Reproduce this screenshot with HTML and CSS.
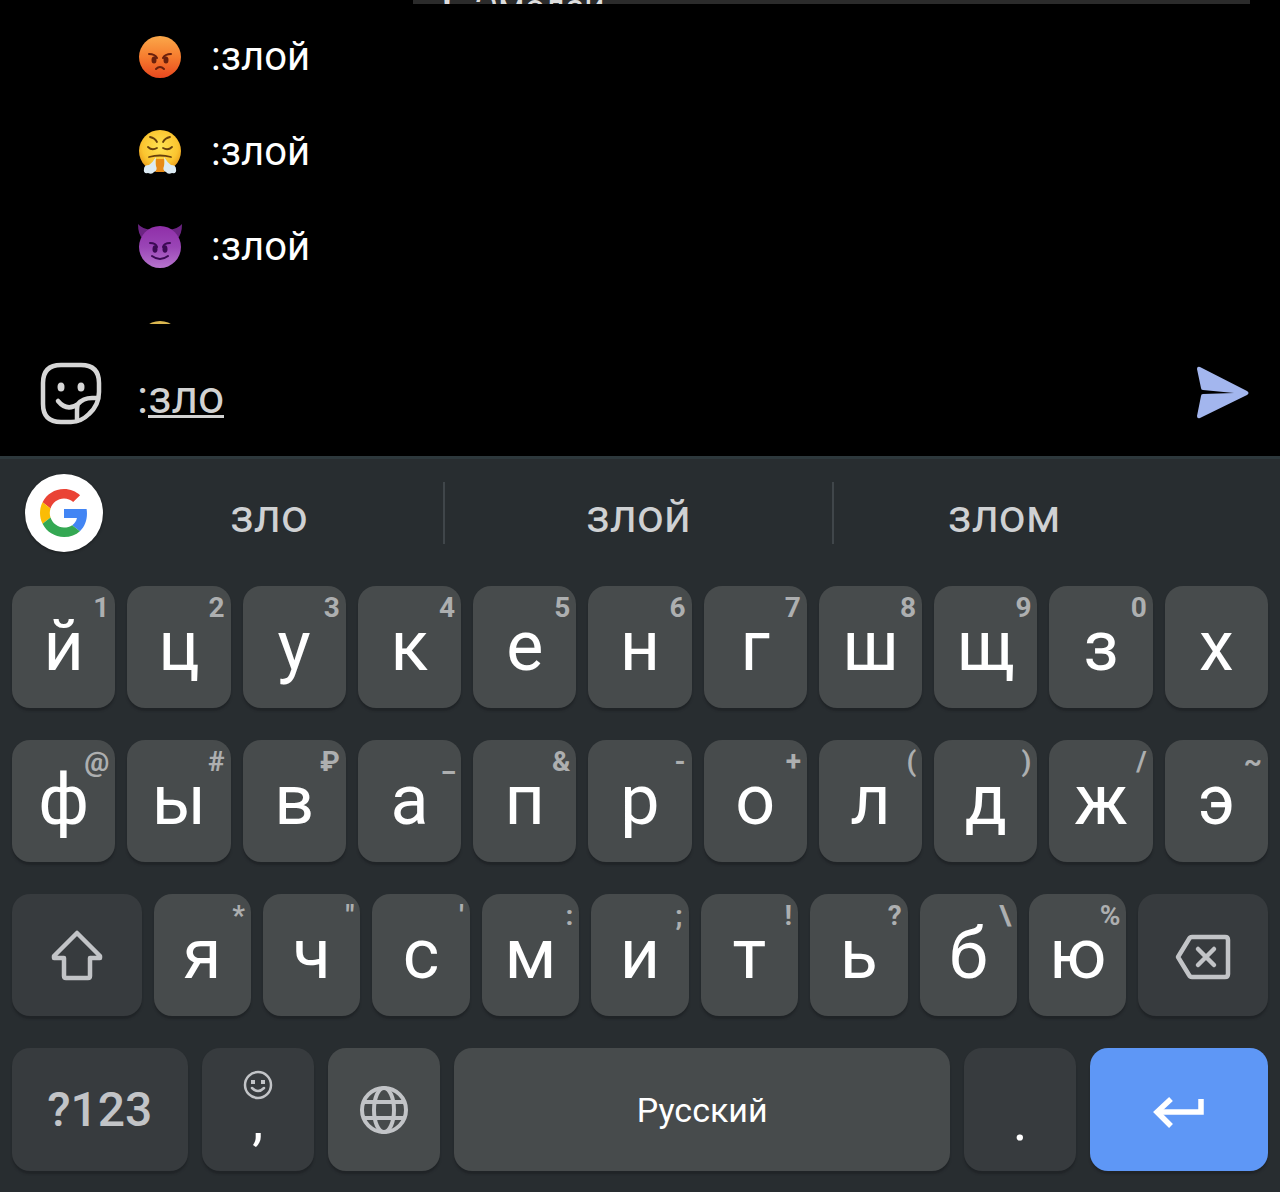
FILE: index.html
```html
<!DOCTYPE html>
<html lang="ru">
<head>
<meta charset="UTF-8">
<meta name="viewport" content="width=device-width, initial-scale=1">
<title>Эмодзи</title>
<link rel="stylesheet" href="styles.css">
</head>
<body>
  <main class="chat">
    <div class="message"><b>!</b><span>Эмодзи</span></div>

    <!-- Emoji suggestions -->
    <ul class="emoji-list">
      <li>
        <button class="emoji-item" type="button">
          <svg class="emoji" viewBox="0 0 48 48" aria-hidden="true">
            <defs>
              <linearGradient id="red" x1="0" y1="0" x2="0" y2="1">
                <stop offset="0" stop-color="#fba84a"/>
                <stop offset="0.5" stop-color="#f67c2e"/>
                <stop offset="1" stop-color="#e8481f"/>
              </linearGradient>
            </defs>
            <circle cx="24" cy="24" r="21" fill="url(#red)"/>
            <g fill="none" stroke="#6a200c" stroke-width="2" stroke-linecap="round">
              <path d="M13 21q6 0 8 4M35 21q-6 0-8 4M20 36q4-4 8 0"/>
            </g>
            <ellipse cx="18" cy="27" rx="2.500" ry="3.500" fill="#6a200c"/>
            <ellipse cx="30" cy="27" rx="2.500" ry="3.500" fill="#6a200c"/>
          </svg>
          <span>:злой</span>
        </button>
      </li>
      <li>
        <button class="emoji-item" type="button">
          <svg class="emoji" viewBox="0 0 48 48" aria-hidden="true">
            <defs>
              <radialGradient id="yellow" cx="0.5" cy="0.4" r="0.6">
                <stop offset="0" stop-color="#ffe352"/>
                <stop offset="0.7" stop-color="#fbc530"/>
                <stop offset="1" stop-color="#e99b1c"/>
              </radialGradient>
            </defs>
            <circle cx="24" cy="23" r="21" fill="url(#yellow)"/>
            <g fill="none" stroke="#68400c" stroke-width="1.800" stroke-linecap="round">
              <path d="M14 9q5 1 7 5M34 9q-5 1-7 5M12 19q4 4 9 1M36 19q-4 4-9 1M13 29q11-3 22 0"/>
            </g>
            <path d="M20 31h8v13h-8z" fill="#e78b18"/>
            <path d="M20 29q-1 6 0 9 2 4-2 6-2 3-6 1-5 1-4-4 0-4 5-4 4-3 7-8zM28 29q1 6 0 9-2 4 2 6 2 3 6 1 5 1 4-4 0-4-5-4-4-3-7-8z" fill="#dcebf4"/>
          </svg>
          <span>:злой</span>
        </button>
      </li>
      <li>
        <button class="emoji-item" type="button">
          <svg class="emoji" viewBox="0 0 48 48" aria-hidden="true">
            <defs>
              <linearGradient id="purple" x1="0" y1="0" x2="0" y2="1">
                <stop offset="0" stop-color="#8f2fa8"/>
                <stop offset="0.5" stop-color="#9a45b6"/>
                <stop offset="1" stop-color="#b674cd"/>
              </linearGradient>
            </defs>
            <path d="M2 1q0 11 5 15l9-9Q6 6 2 1zM46 1q0 11-5 15l-9-9q10-1 14-6z" fill="#6c2483"/>
            <circle cx="24" cy="24" r="21" fill="url(#purple)"/>
            <g fill="none" stroke="#3b0a54" stroke-width="2" stroke-linecap="round">
              <path d="M14 20q6 0 7 4M34 20q-6 0-7 4M16 33q8 6 16 0"/>
            </g>
            <ellipse cx="19" cy="26" rx="2.500" ry="3.800" fill="#3b0a54"/>
            <ellipse cx="29" cy="26" rx="2.500" ry="3.800" fill="#3b0a54"/>
          </svg>
          <span>:злой</span>
        </button>
      </li>
      <li>
        <button class="emoji-item" type="button" aria-label="Эмодзи">
          <svg class="emoji" viewBox="0 0 48 48" aria-hidden="true">
            <circle cx="24" cy="24" r="21" fill="#dcb850"/>
          </svg>
        </button>
      </li>
    </ul>

    <form class="composer">
      <button class="icon-button" type="button" aria-label="Стикеры">
        <svg class="sticker-icon" viewBox="0 0 64 64" fill="none" stroke="#d6d6d6" stroke-width="4.500">
          <path d="M22 4h20q18 0 18 18v9q0 13-10 22-8 8-18 8H22Q4 61 4 43V22Q4 4 22 4z"/>
          <path d="M59 37H53Q44 37 39 43 38 45 38 51v9M19 40q9 11 20 3" stroke-linecap="round"/>
          <ellipse cx="22" cy="26" rx="3.500" ry="4.500" fill="#d6d6d6" stroke="none"/>
          <ellipse cx="42" cy="26" rx="3.500" ry="4.500" fill="#d6d6d6" stroke="none"/>
        </svg>
      </button>
      <input class="message-input" type="text" value=":зло" aria-label="Сообщение">
      <button class="icon-button" type="button" aria-label="Отправить">
        <svg class="send-icon" viewBox="0 0 54 54">
          <path d="M4 1 51 25q3 2 0 4L4 52q-3 1-3-2L5 30q0-2 2-2l31-1-31-3q-2 0-2-2L1 3q0-3 3-2z" fill="#a3b6ee"/>
        </svg>
      </button>
    </form>
  </main>

  <section class="keyboard">
    <div class="suggestions">
      <button class="google" type="button" aria-label="Google">
        <svg viewBox="0 0 48 48">
          <path fill="#ea4335" d="M24 9.500c3.540 0 6.710 1.220 9.210 3.600l6.850-6.850C35.900 2.380 30.470 0 24 0 14.620 0 6.510 5.380 2.560 13.220l7.980 6.190C12.430 13.720 17.740 9.500 24 9.500z"/>
          <path fill="#4285f4" d="M46.980 24.550c0-1.570-.15-3.090-.38-4.550H24v9.020h12.940c-.58 2.960-2.260 5.480-4.780 7.180l7.730 6c4.510-4.180 7.090-10.360 7.090-17.650z"/>
          <path fill="#fbbc05" d="M10.530 28.590c-.48-1.450-.76-2.990-.76-4.590s.27-3.140.76-4.590l-7.980-6.190C.92 16.460 0 20.120 0 24s.92 7.540 2.560 10.780l7.970-6.190z"/>
          <path fill="#34a853" d="M24 48c6.480 0 11.930-2.130 15.890-5.810l-7.730-6c-2.150 1.450-4.920 2.300-8.160 2.300-6.260 0-11.570-4.220-13.470-9.910l-7.980 6.190C6.510 42.620 14.620 48 24 48z"/>
        </svg>
      </button>
      <button class="word" type="button">зло</button>
      <button class="word" type="button">злой</button>
      <button class="word" type="button">злом</button>
    </div>

    <div class="keys">
      <div class="row">
        <button class="key" type="button">й<span class="hint">1</span></button>
        <button class="key" type="button">ц<span class="hint">2</span></button>
        <button class="key" type="button">у<span class="hint">3</span></button>
        <button class="key" type="button">к<span class="hint">4</span></button>
        <button class="key" type="button">е<span class="hint">5</span></button>
        <button class="key" type="button">н<span class="hint">6</span></button>
        <button class="key" type="button">г<span class="hint">7</span></button>
        <button class="key" type="button">ш<span class="hint">8</span></button>
        <button class="key" type="button">щ<span class="hint">9</span></button>
        <button class="key" type="button">з<span class="hint">0</span></button>
        <button class="key" type="button">х</button>
      </div>
      <div class="row">
        <button class="key" type="button">ф<span class="hint">@</span></button>
        <button class="key" type="button">ы<span class="hint">#</span></button>
        <button class="key" type="button">в<span class="hint">₽</span></button>
        <button class="key" type="button">а<span class="hint">_</span></button>
        <button class="key" type="button">п<span class="hint">&amp;</span></button>
        <button class="key" type="button">р<span class="hint">-</span></button>
        <button class="key" type="button">о<span class="hint">+</span></button>
        <button class="key" type="button">л<span class="hint">(</span></button>
        <button class="key" type="button">д<span class="hint">)</span></button>
        <button class="key" type="button">ж<span class="hint">/</span></button>
        <button class="key" type="button">э<span class="hint">~</span></button>
      </div>
      <div class="row row-shift">
        <button class="key dark" type="button" aria-label="Shift">
          <svg class="key-icon" viewBox="0 0 56 56" fill="none" stroke="#c2c4c7" stroke-width="4.500" stroke-linejoin="round">
            <path d="M28 7 5 30v2h10v18q0 2 2 2h22q2 0 2-2V32h10v-2z"/>
          </svg>
        </button>
        <button class="key" type="button">я<span class="hint">*</span></button>
        <button class="key" type="button">ч<span class="hint">"</span></button>
        <button class="key" type="button">с<span class="hint">'</span></button>
        <button class="key" type="button">м<span class="hint">:</span></button>
        <button class="key" type="button">и<span class="hint">;</span></button>
        <button class="key" type="button">т<span class="hint">!</span></button>
        <button class="key" type="button">ь<span class="hint">?</span></button>
        <button class="key" type="button">б<span class="hint">\</span></button>
        <button class="key" type="button">ю<span class="hint">%</span></button>
        <button class="key dark" type="button" aria-label="Удалить">
          <svg class="key-icon" viewBox="0 0 56 56" fill="none" stroke="#c2c4c7" stroke-width="4.500" stroke-linejoin="round">
            <path d="M17 11h33q3 0 3 3v34q0 3-3 3H17q-2 0-3-2L3 31 14 13q1-2 3-2z"/>
            <path d="m23 23 16 16M39 23 23 39" stroke-linecap="round"/>
          </svg>
        </button>
      </div>
      <div class="row row-bottom">
        <button class="key dark symbols" type="button">?123</button>
        <button class="key dark comma" type="button">
          <svg class="smile" viewBox="0 0 30 30" fill="none" stroke="#c2c4c7" stroke-width="2.500">
            <circle cx="15" cy="15" r="13"/>
            <path d="M9 18q6 6 12 0" stroke-linecap="round"/>
            <path d="M8 10h4v4H8zM18 10h4v4h-4z" fill="#c2c4c7" stroke="none"/>
          </svg>
          <span>,</span>
        </button>
        <button class="key" type="button" aria-label="Язык">
          <svg class="globe" viewBox="0 0 50 50" fill="none" stroke="#c2c4c7" stroke-width="4">
            <circle cx="25" cy="25" r="22"/>
            <ellipse cx="25" cy="25" rx="10" ry="22"/>
            <path d="M5 17h40M5 33h40"/>
          </svg>
        </button>
        <button class="key space" type="button">Русский</button>
        <button class="key dark dot" type="button">.</button>
        <button class="key enter" type="button" aria-label="Ввод">
          <svg class="key-icon" viewBox="0 0 56 56" fill="none" stroke="#fff" stroke-width="5.500">
            <path d="M50 17v13H7"/>
            <path d="M20 17 6 30l14 14"/>
          </svg>
        </button>
      </div>
    </div>
  </section>
</body>
</html>
```
FILE: styles.css
```css
* {
  box-sizing: border-box;
}

body {
  margin: 0;
  background-color: #000000;
  color: #ffffff;
  font-family: Roboto, "Noto Sans", sans-serif;
}

button {
  margin: 0;
  padding: 0;
  border: none;
  background: none;
  color: inherit;
  font-family: inherit;
  cursor: pointer;
}

svg {
  display: block;
}

/* Chat */

.message {
  display: flex;
  align-items: flex-start;
  gap: 22px;
  height: 4px;
  margin: 0 30px 0 413px;
  padding-left: 29px;
  background-color: #2b2b2b;
  color: #dddddd;
  font-size: 36px;
  line-height: 16px;
  overflow: hidden;
}

.emoji-list {
  height: 320px;
  margin: 0;
  padding: 5px 0 0;
  list-style: none;
  overflow: hidden;
}

.emoji-item {
  display: flex;
  align-items: center;
  gap: 27px;
  width: 100%;
  height: 95px;
  padding-left: 136px;
  font-size: 40px;
}

.emoji {
  width: 48px;
  height: 48px;
}

.composer {
  display: flex;
  align-items: center;
  gap: 34px;
  height: 132px;
  padding: 6px 30px 0 39px;
}

.message-input {
  flex: 1;
  min-width: 0;
  height: 60px;
  margin-top: 8px;
  padding: 0;
  border: none;
  outline: none;
  /* composing underline below the word */
  background: linear-gradient(#d2d2d2, #d2d2d2) 11px 48px / 76px 3px no-repeat;
  color: #d2d2d2;
  font-family: inherit;
  font-size: 46px;
}

.sticker-icon {
  width: 64px;
  height: 64px;
}

.send-icon {
  width: 54px;
  height: 54px;
}

/* Keyboard */

.keyboard {
  border-top: 3px solid #2d383c;
  background-color: #282d30;
}

.suggestions {
  display: grid;
  grid-template-columns: 70px 348fr 390fr 342fr;
  align-items: center;
  height: 108px;
  padding: 0 106px 0 25px;
}

.google {
  display: flex;
  align-items: center;
  justify-content: center;
  width: 78px;
  height: 78px;
  border-radius: 50%;
  background-color: #ffffff;
  box-shadow: 0 1px 3px rgba(0, 0, 0, 0.4);
}

.google svg {
  width: 48px;
  height: 48px;
}

.word {
  height: 62px;
  padding-top: 4px;
  color: #cfd1d3;
  font-size: 47px;
}

.word + .word {
  border-left: 2px solid #40464a;
}

.keys {
  display: flex;
  flex-direction: column;
  gap: 32px;
  padding: 19px 12px 22px;
}

.row {
  display: grid;
  grid-template-columns: repeat(11, 1fr);
  gap: 12px;
}

.row-shift {
  grid-template-columns: 129fr repeat(9, 97fr) 129fr;
}

.row-bottom {
  grid-template-columns: 175fr 112fr 112fr 494fr 112fr 177fr;
  gap: 14px;
}

.key {
  position: relative;
  display: flex;
  align-items: center;
  justify-content: center;
  height: 122px;
  padding-bottom: 2px;
  border-radius: 18px;
  background-color: #474b4c;
  box-shadow: 0 3px 2px #202427;
  color: #ffffff;
  font-size: 70px;
}

.dark {
  background-color: #373b3e;
}

.hint {
  position: absolute;
  top: 5px;
  right: 6px;
  color: #adafb0;
  font-size: 28px;
  font-weight: 700;
  line-height: 34px;
}

.key-icon {
  width: 56px;
  height: 56px;
}

.row-bottom .key {
  height: 123px;
  padding: 0;
}

.row-bottom .symbols {
  color: #c2c4c7;
  font-size: 48px;
  font-weight: 500;
}

.row-bottom .comma {
  flex-direction: column;
  justify-content: flex-start;
  padding-top: 22px;
  font-size: 56px;
  line-height: 40px;
}

.smile {
  width: 30px;
  height: 30px;
}

.globe {
  width: 50px;
  height: 50px;
}

.row-bottom .space {
  font-size: 34px;
}

.row-bottom .dot {
  align-items: flex-end;
  padding-bottom: 30px;
  font-size: 56px;
  line-height: 40px;
}

.row-bottom .enter {
  background-color: #5e97f6;
}
```
